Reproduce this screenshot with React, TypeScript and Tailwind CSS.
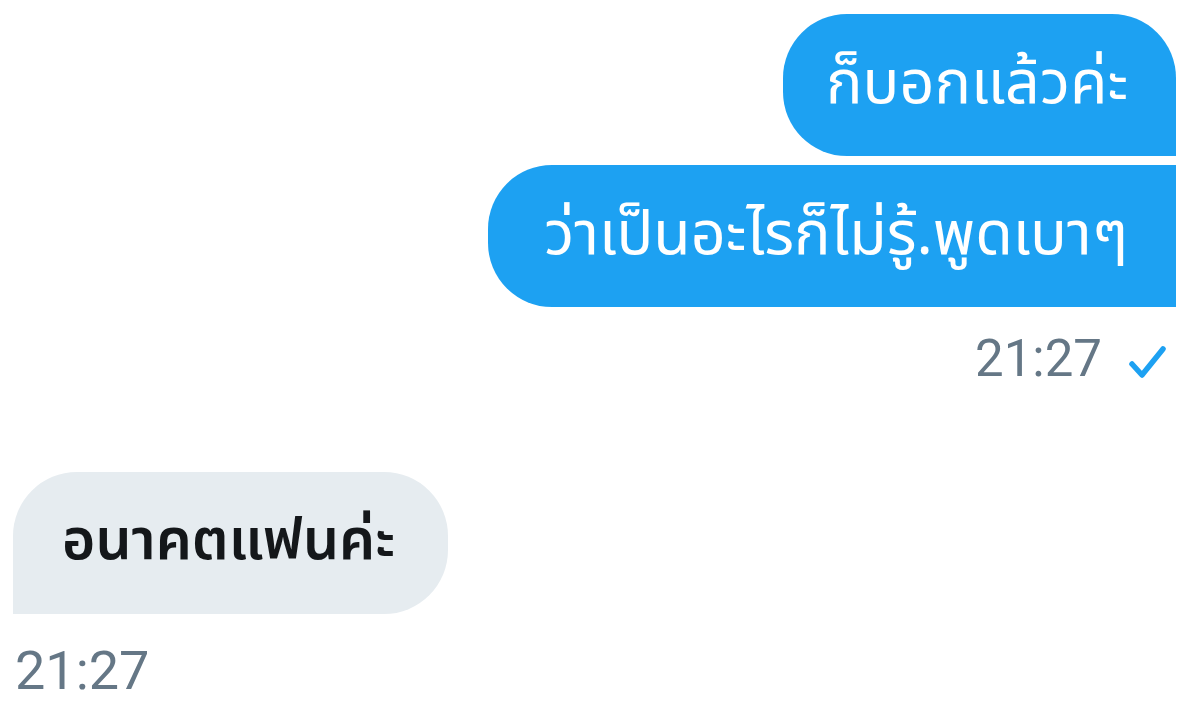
export default function App() {
  const thai = { fontFamily: '"Noto Sans Thai", "Noto Sans Thai UI", "Noto Sans", Roboto, sans-serif' };
  return (
    <div className="w-[1200px] h-[705px] bg-white overflow-hidden flex flex-col" style={thai}>
      {/* Sent messages */}
      <div className="flex flex-col items-end pt-[14px] pr-[24px] gap-[9px]">
        <div className="h-[142px] flex items-center pl-[43px] pr-[48px] bg-[#1da1f2] text-white text-[61px] rounded-[64px] rounded-br-none">
          ก็บอกแล้วค่ะ
        </div>
        <div className="h-[142px] flex items-center pl-[56px] pr-[48px] bg-[#1da1f2] text-white text-[61px] rounded-l-[64px]">
          ว่าเป็นอะไรก็ไม่รู้.พูดเบาๆ
        </div>
      </div>
      <div className="flex items-center justify-end gap-[26px] pr-[32px] mt-[22px] h-[60px]">
        <span className="text-[51px] leading-[60px] text-[#657786]" style={{ fontFamily: 'Roboto, sans-serif' }}>21:27</span>
        <svg width="40" height="40" viewBox="0 0 40 40" fill="none" className="mt-[6px]">
          <polyline points="4,22 14,33 35,7" stroke="#1da1f2" strokeWidth="5.5" strokeLinecap="round" strokeLinejoin="round" />
        </svg>
      </div>

      {/* Received message */}
      <div className="flex flex-col items-start pl-[13px] mt-[83px]">
        <div className="h-[142px] flex items-center pl-[49px] pr-[53px] bg-[#e6ecf0] text-[#14171a] text-[57px] font-semibold rounded-[64px] rounded-bl-none">
          อนาคตแฟนค่ะ
        </div>
        <span className="mt-[27px] pl-[2px] text-[54px] leading-[60px] text-[#657786]" style={{ fontFamily: 'Roboto, sans-serif' }}>21:27</span>
      </div>
    </div>
  );
}
